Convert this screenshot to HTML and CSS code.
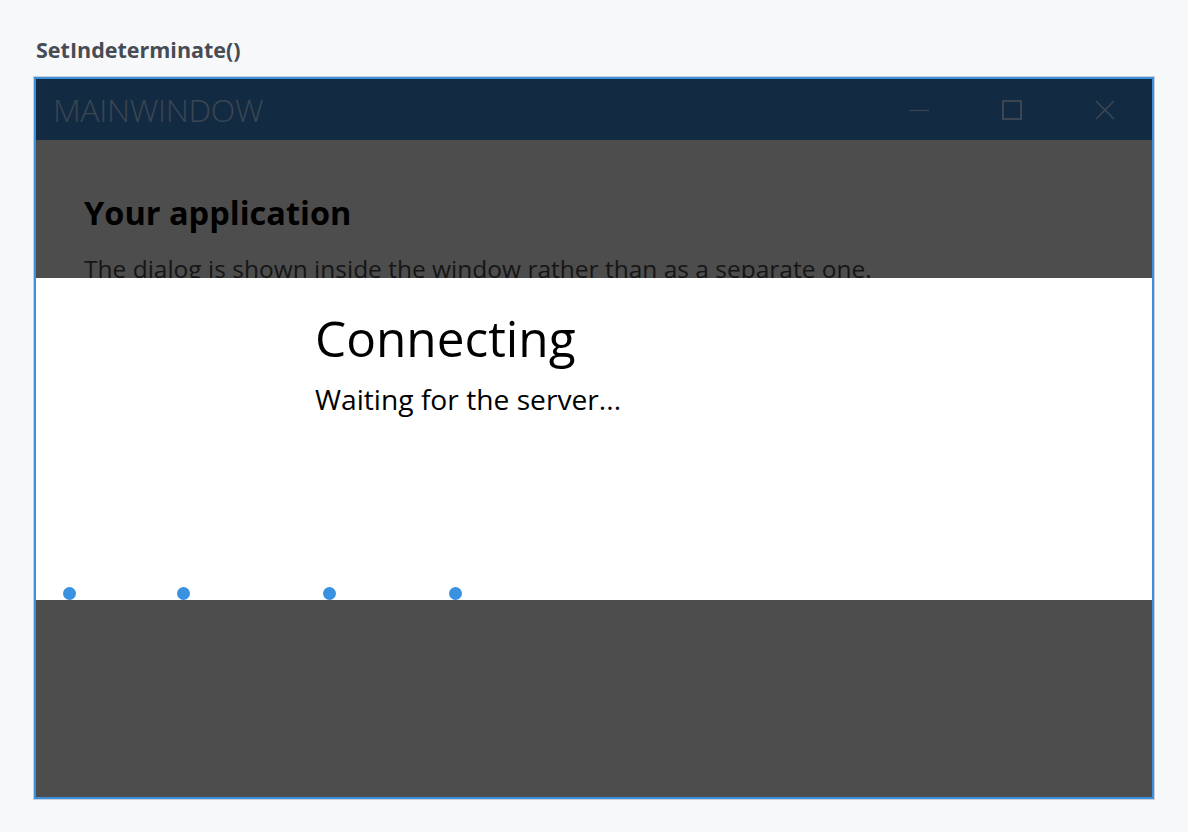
FILE: index.html
```html
<!DOCTYPE html>
<html>
<head>
<meta charset="utf-8">
<link rel="stylesheet" href="styles.css">
</head>
<body>
<div class="page">
  <h1 class="label">SetIndeterminate()</h1>
  <div class="frame">
    <div class="window">
      <div class="titlebar">
        <span class="app-title">MAINWINDOW</span>
        <div class="controls">
          <span class="ctl"><svg width="22" height="22" viewBox="0 0 22 22"><path d="M1 11.5H21" stroke="#3b4652" stroke-width="1.2" fill="none"/></svg></span>
          <span class="ctl"><svg width="22" height="22" viewBox="0 0 22 22"><rect x="2" y="2" width="18" height="18" stroke="#3b4652" stroke-width="2" fill="none"/></svg></span>
          <span class="ctl"><svg width="22" height="22" viewBox="0 0 22 22"><path d="M2 2L20 20M20 2L2 20" stroke="#3b4652" stroke-width="1.6" fill="none"/></svg></span>
        </div>
      </div>
      <div class="client">
        <div class="app">
          <h2 class="app-heading">Your application</h2>
          <p class="app-text">The dialog is shown inside the window rather than as a separate one.</p>
        </div>
        <div class="overlay">
          <div class="dialog">
            <div class="dialog-content">
              <div class="dialog-title">Connecting</div>
              <div class="dialog-msg">Waiting for the server...</div>
            </div>
            <div class="dots">
              <span class="dot" style="left:27px"></span>
              <span class="dot" style="left:141px"></span>
              <span class="dot" style="left:287px"></span>
              <span class="dot" style="left:413px"></span>
            </div>
          </div>
        </div>
      </div>
    </div>
  </div>
</div>
</body>
</html>
```
FILE: styles.css
```css
html, body {
  margin: 0;
  padding: 0;
  background: #f7f8fa;
  font-family: "Open Sans", "Noto Sans", sans-serif;
}
.page {
  padding: 37px 0 0 33px;
}
.label {
  margin: 0 0 13px 3px;
  font-size: 21.5px;
  line-height: 26px;
  font-weight: 700;
  color: #474c54;
}
.frame {
  width: 1120px;
  border: 1px solid #cbd0d8;
}
.window {
  border: 2px solid #3b8fdd;
  background: #4d4d4d;
  height: 718px;
  display: flex;
  flex-direction: column;
}
.titlebar {
  height: 61px;
  background: #122b43;
  display: flex;
  align-items: center;
  justify-content: space-between;
  padding-left: 17px;
  flex-shrink: 0;
}
.app-title {
  font-weight: 300;
  font-size: 32px;
  color: #3b4652;
  letter-spacing: -0.3px;
}
.controls {
  display: flex;
  align-items: center;
  padding-right: 36px;
  gap: 71px;
}
.ctl {
  display: flex;
  width: 22px;
  height: 22px;
}
.client {
  flex: 1;
  position: relative;
  background: #4d4d4d;
  overflow: hidden;
}
.app {
  padding: 52px 48px;
}
.app-heading {
  margin: 0;
  font-size: 32.5px;
  line-height: 42px;
  font-weight: 700;
  color: #000;
}
.app-text {
  margin: 18px 0 0;
  font-size: 24.5px;
  line-height: 34px;
  color: #161616;
}
.overlay {
  position: absolute;
  inset: 0;
  padding-top: 138px;
}
.dialog {
  position: relative;
  height: 322px;
  background: #fff;
}
.dialog-content {
  padding: 27px 0 0 279px;
}
.dialog-title {
  font-size: 49.5px;
  line-height: 66px;
  color: #000;
}
.dialog-msg {
  font-size: 28.2px;
  line-height: 40px;
  color: #000;
  margin-top: 8px;
}
.dot {
  position: absolute;
  top: 309px;
  width: 13px;
  height: 13px;
  border-radius: 50%;
  background: #3a91df;
}
```
